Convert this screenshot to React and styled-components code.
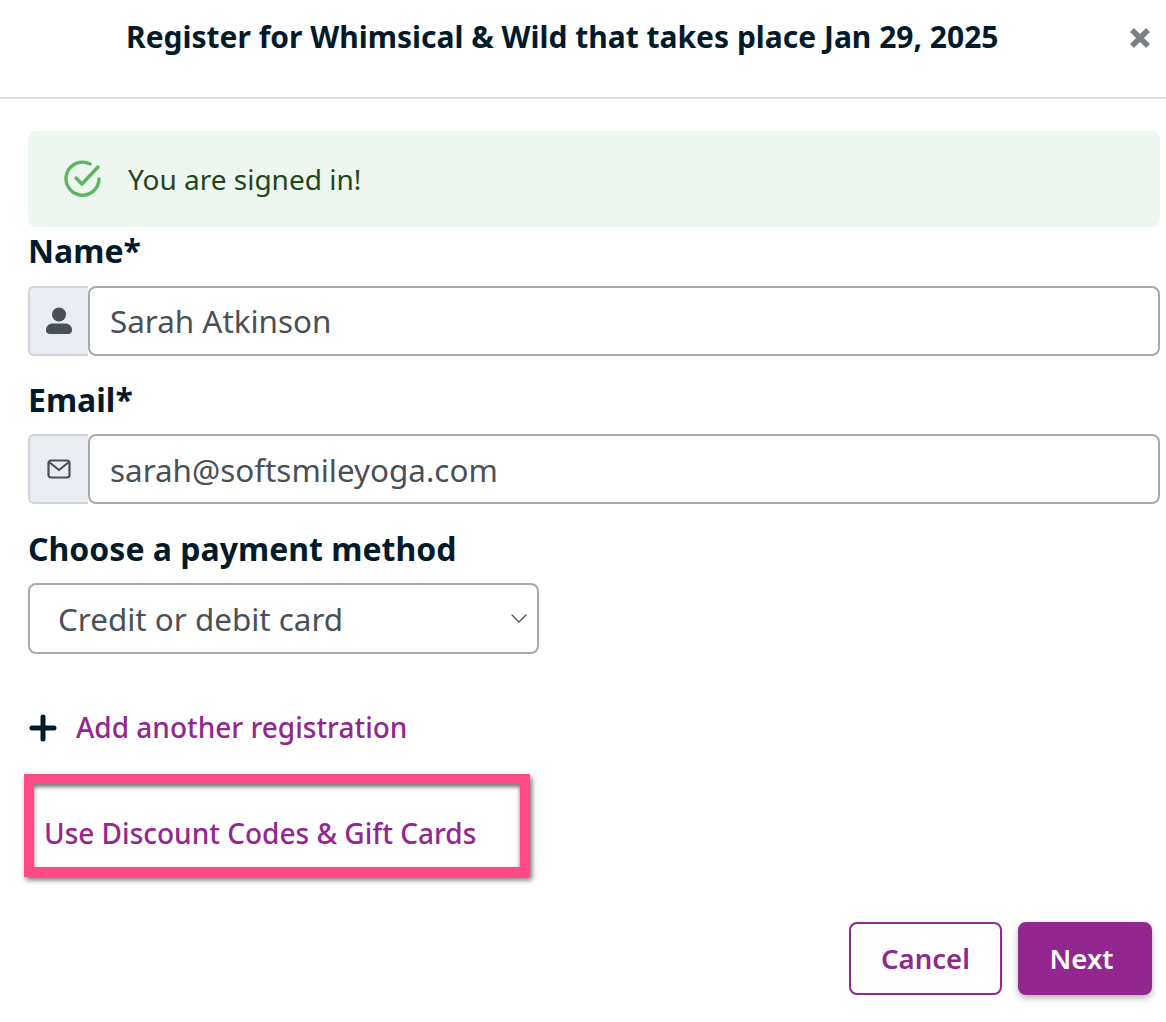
import React from 'react';
import styled, { createGlobalStyle } from 'styled-components';

const GlobalStyle = createGlobalStyle`
    html, body {
        margin: 0;
        padding: 0;
        background: #fff;
        font-family: "Noto Sans", "Open Sans", sans-serif;
    }

    * {
        box-sizing: border-box;
    }
`;

const Modal = styled.div`
    width: 1166px;
    height: 1022px;
    display: flex;
    flex-direction: column;
    overflow: hidden;
`;

const Header = styled.header`
    display: flex;
    align-items: flex-start;
    justify-content: space-between;
    height: 99px;
    padding: 17px 16px 0 126px;
    border-bottom: 2px solid #dee2e6;
`;

const Title = styled.h1`
    margin: 0;
    font-size: 30px;
    line-height: 40px;
    font-weight: 700;
    color: #021b2b;
    white-space: nowrap;
`;

const CloseButton = styled.button`
    display: flex;
    width: 20px;
    height: 20px;
    margin-top: 11px;
    padding: 0;
    border: 0;
    background: none;
    cursor: pointer;
`;

const Body = styled.main`
    display: flex;
    flex-direction: column;
    padding: 32px 0 0 28px;
`;

const Alert = styled.div`
    display: flex;
    align-items: center;
    gap: 26px;
    width: 1132px;
    height: 96px;
    padding-left: 36px;
    border-radius: 8px;
    background: #edf6ef;
    color: #1e4620;
    font-size: 28px;
`;

const Label = styled.label`
    display: block;
    margin: ${({$top}) => $top}px 0 ${({$bottom}) => $bottom}px 0;
    font-size: 32px;
    line-height: 38px;
    font-weight: 700;
    color: #021b2b;
`;

const InputGroup = styled.div`
    display: flex;
    width: 1132px;
    height: 70px;
`;

const Addon = styled.span`
    display: flex;
    align-items: center;
    justify-content: center;
    width: 60px;
    padding-right: 1px;
    border: 2px solid #ced4da;
    border-right: 0;
    border-radius: 6px 0 0 6px;
    background: #e9ecf0;
    color: #495057;
`;

const Input = styled.div`
    flex: 1;
    display: flex;
    align-items: center;
    padding-left: 20px;
    border: 2px solid #a9a9a9;
    border-radius: 8px;
    background: #fff;
    color: #495057;
    font-size: 31.4px;
`;

const Select = styled.div`
    display: flex;
    align-items: center;
    justify-content: space-between;
    width: 511px;
    height: 71px;
    padding: 0 9px 0 28px;
    border: 2px solid #a9a9a9;
    border-radius: 8px;
    color: #495057;
    font-size: 31.4px;
`;

const AddRow = styled.div`
    display: flex;
    align-items: center;
    gap: 19px;
    height: 40px;
    margin: 54px 0 0 1px;
`;

const PurpleLink = styled.a`
    margin-bottom: 2px;
    color: #92278f;
    font-size: 28px;
    font-weight: 500;
    text-decoration: none;
    cursor: pointer;
`;

const Highlight = styled.div`
    display: flex;
    align-items: center;
    width: 506px;
    height: 103px;
    margin: 26px 0 0 -4px;
    padding: 16px 0 0 10px;
    border: 10px solid #ff4a85;
    box-shadow: 2px 3px 5px rgba(0, 0, 0, 0.55), inset 0 3px 4px rgba(0, 0, 0, 0.55);
`;

const Footer = styled.footer`
    display: flex;
    justify-content: flex-end;
    gap: 16px;
    margin: 45px 14px 0 0;
`;

const Button = styled.button`
    height: 73px;
    width: ${({$primary}) => $primary ? '134px' : '153px'};
    padding: ${({$primary}) => $primary ? '0 7px 0 0' : '0'};
    border: 2px solid #92278f;
    border-radius: 8px;
    background: ${({$primary}) => $primary ? '#92278f' : '#fff'};
    color: ${({$primary}) => $primary ? '#fff' : '#92278f'};
    box-shadow: ${({$primary}) => $primary ? '0 3px 6px rgba(0, 0, 0, 0.3)' : 'none'};
    font-family: inherit;
    font-size: 27.500px;
    font-weight: 600;
    cursor: pointer;
`;

const CheckIcon = () => (
    <svg width="38" height="38" viewBox="0 0 38 38" fill="none" stroke="#5cb660" strokeWidth="3.400" strokeLinecap="round" strokeLinejoin="round">
        <path d="M35 19a16.500 16.500 0 1 1-9-15" />
        <path d="M12 18l6 6L34 7" />
    </svg>
);

const UserIcon = () => (
    <svg width="28" height="28" viewBox="0 0 28 28" fill="currentColor">
        <circle cx="14" cy="7.500" r="7" />
        <path d="M1 23c0-4 3-6.500 7-6.500h12c4 0 7 2.500 7 6.500 0 2.500-1.500 4-4 4H5c-2.500 0-4-1.500-4-4z" />
    </svg>
);

const MailIcon = () => (
    <svg width="24" height="20" viewBox="0 0 24 20" fill="none" stroke="currentColor" strokeWidth="2.200" strokeLinejoin="round">
        <rect x="1.500" y="1.500" width="21" height="17" rx="2.500" />
        <path d="M2 3l10 8 10-8" />
    </svg>
);

const ChevronIcon = () => (
    <svg width="18" height="12" viewBox="0 0 18 12" fill="none" stroke="#495057" strokeWidth="1.200" strokeLinecap="round" strokeLinejoin="round">
        <path d="M2 2l7 7 7-7" />
    </svg>
);

const PlusIcon = () => (
    <svg width="28" height="28" viewBox="0 0 28 28" fill="none" stroke="#021b2b" strokeWidth="5" strokeLinecap="round">
        <path d="M14 3v22M3 14h22" />
    </svg>
);

const CloseIcon = () => (
    <svg width="20" height="20" viewBox="0 0 20 20" fill="none" stroke="#7b7f84" strokeWidth="5.500">
        <path d="M2 2l16 16M18 2L2 18" />
    </svg>
);

const App = () => (
    <Modal>
        <GlobalStyle />
        <Header>
            <Title>Register for Whimsical &amp; Wild that takes place Jan 29, 2025</Title>
            <CloseButton aria-label='Close'><CloseIcon /></CloseButton>
        </Header>
        <Body>
            <Alert><CheckIcon />You are signed in!</Alert>
            <Label $top={5} $bottom={15.5}>Name*</Label>
            <InputGroup>
                <Addon><UserIcon /></Addon>
                <Input>Sarah Atkinson</Input>
            </InputGroup>
            <Label $top={25.5} $bottom={15}>Email*</Label>
            <InputGroup>
                <Addon><MailIcon /></Addon>
                <Input>sarah@softsmileyoga.com</Input>
            </InputGroup>
            <Label $top={26} $bottom={15}>Choose a payment method</Label>
            <Select>Credit or debit card<ChevronIcon /></Select>
            <AddRow>
                <PlusIcon />
                <PurpleLink>Add another registration</PurpleLink>
            </AddRow>
            <Highlight>
                <PurpleLink>Use Discount Codes &amp; Gift Cards</PurpleLink>
            </Highlight>
            <Footer>
                <Button>Cancel</Button>
                <Button $primary>Next</Button>
            </Footer>
        </Body>
    </Modal>
);

export default App;
